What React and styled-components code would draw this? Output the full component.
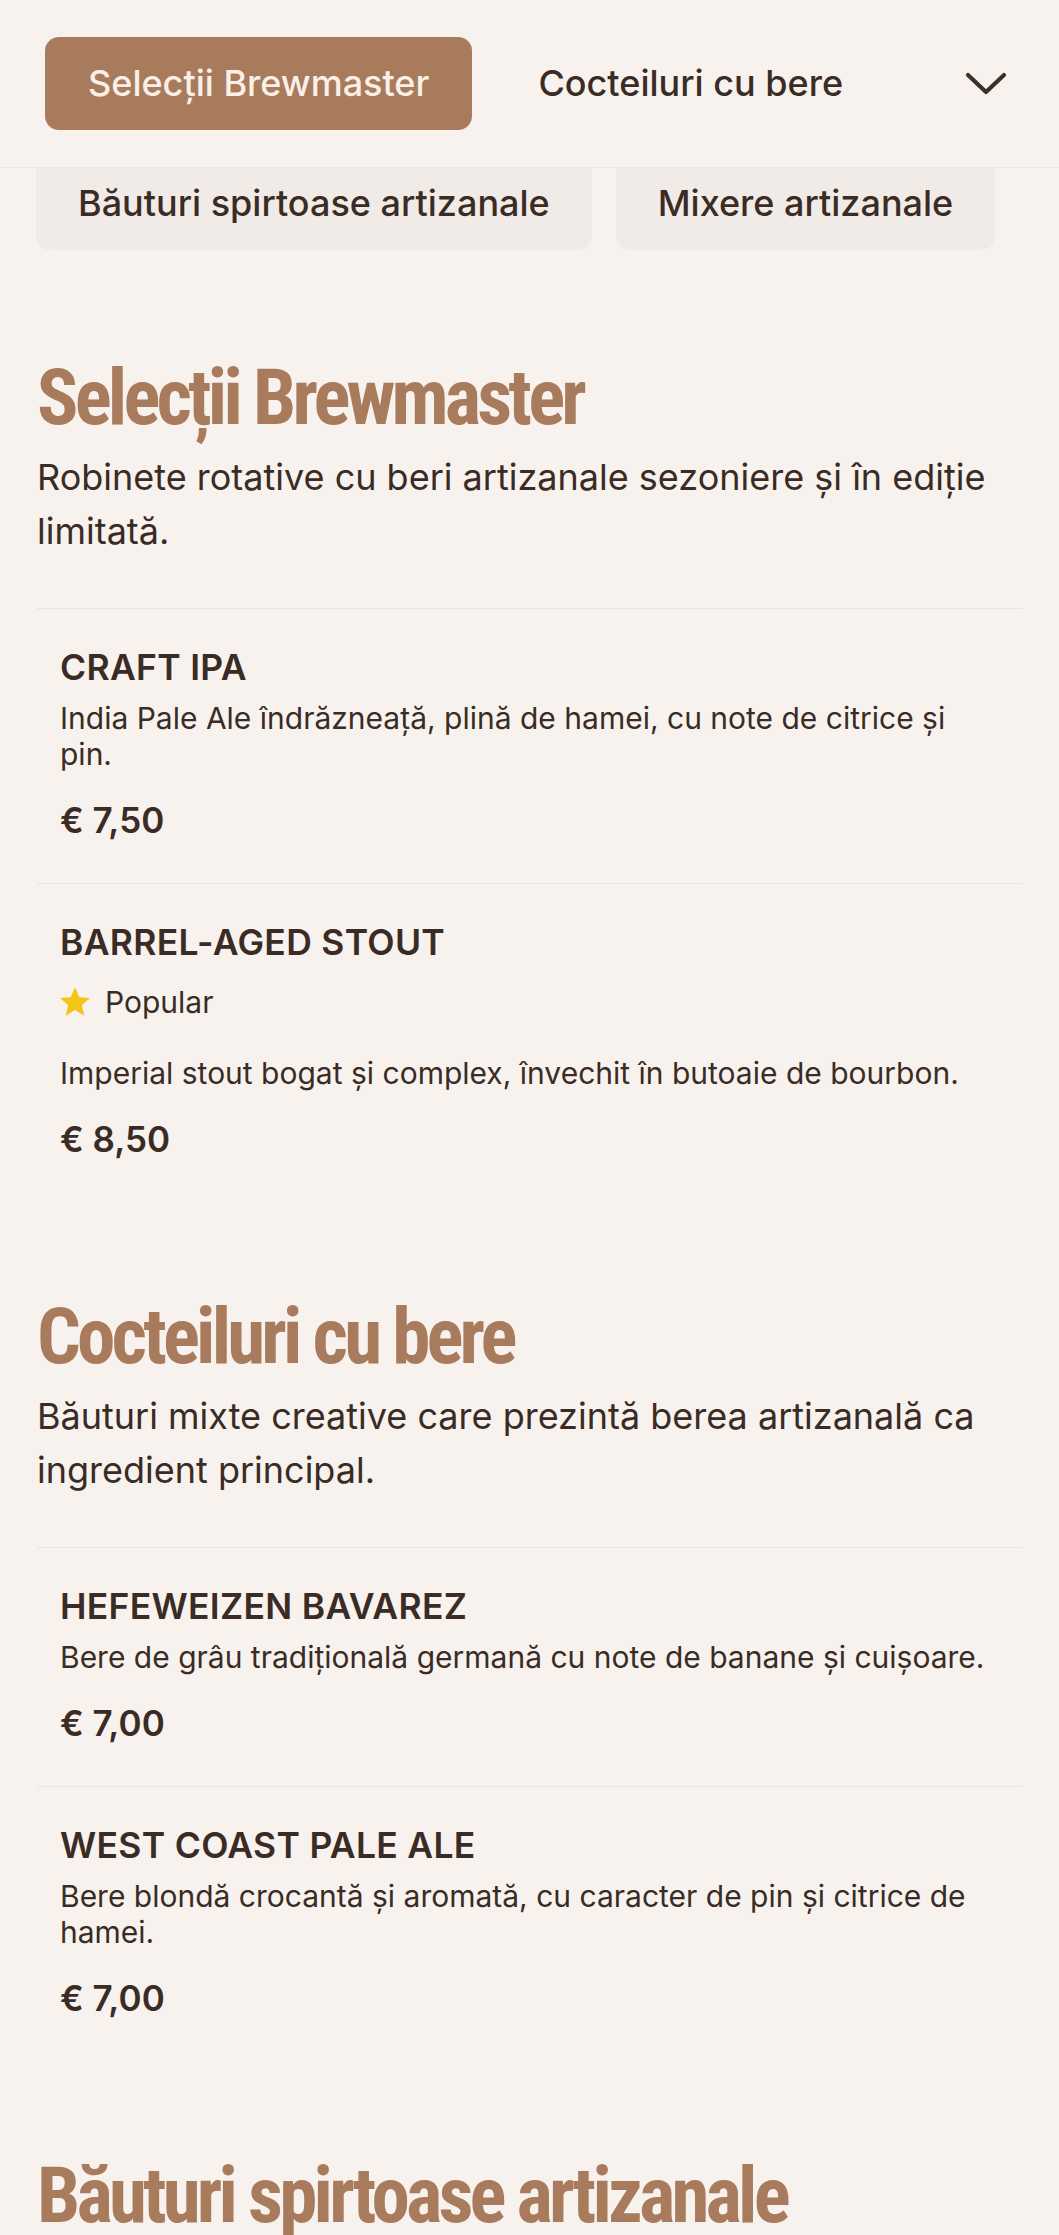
import React from "react";
import styled, { createGlobalStyle } from "styled-components";

const GlobalStyle = createGlobalStyle`
  * {
    box-sizing: border-box;
  }

  body {
    margin: 0;
    background: #f7f2ee;
    color: #3a2c24;
    font-family: Inter, "Noto Sans", sans-serif;
  }
`;

const sections = [
  {
    title: "Selecții Brewmaster",
    text: "Robinete rotative cu beri artizanale sezoniere și în ediție limitată.",
    items: [
      {
        name: "Craft IPA",
        desc: "India Pale Ale îndrăzneață, plină de hamei, cu note de citrice și pin.",
        price: "€ 7,50",
      },
      {
        name: "Barrel-Aged Stout",
        popular: true,
        desc: "Imperial stout bogat și complex, învechit în butoaie de bourbon.",
        price: "€ 8,50",
      },
    ],
  },
  {
    title: "Cocteiluri cu bere",
    text: "Băuturi mixte creative care prezintă berea artizanală ca ingredient principal.",
    items: [
      {
        name: "Hefeweizen Bavarez",
        desc: "Bere de grâu tradițională germană cu note de banane și cuișoare.",
        price: "€ 7,00",
      },
      {
        name: "West Coast Pale Ale",
        desc: "Bere blondă crocantă și aromată, cu caracter de pin și citrice de hamei.",
        price: "€ 7,00",
      },
    ],
  },
  {
    title: "Băuturi spirtoase artizanale",
    text: "",
    items: [],
  },
];

function App() {
  return (
    <Page>
      <GlobalStyle />
      <Header>
        <Tab $active>Selecții Brewmaster</Tab>
        <Tab>Cocteiluri cu bere</Tab>
        <Toggle aria-label="Mai multe categorii">
          <svg width="44" height="26" viewBox="0 0 44 26" fill="none">
            <polyline
              points="4,4 22,21 40,4"
              stroke="#3d302a"
              strokeWidth="4.2"
              strokeLinecap="round"
              strokeLinejoin="round"
            />
          </svg>
        </Toggle>
      </Header>
      <ChipRow>
        <Chip>Băuturi spirtoase artizanale</Chip>
        <Chip>Mixere artizanale</Chip>
      </ChipRow>

      <Main>
        {sections.map((section) => (
          <Section key={section.title}>
            <SectionTitle>{section.title}</SectionTitle>
            {section.text && <SectionText>{section.text}</SectionText>}
            {section.items.map((item) => (
              <Item key={item.name}>
                <ItemName>{item.name}</ItemName>
                {item.popular && (
                  <Badge>
                    <svg width="30" height="30" viewBox="2 2 20 20">
                      <path
                        d="M12 2.2l2.9 6.6 7.1.6-5.4 4.7 1.6 7-6.2-3.7-6.2 3.7 1.6-7L2 9.4l7.1-.6z"
                        fill="#f5c419"
                      />
                    </svg>
                    Popular
                  </Badge>
                )}
                <ItemDesc>{item.desc}</ItemDesc>
                <Price>{item.price}</Price>
              </Item>
            ))}
          </Section>
        ))}
      </Main>
    </Page>
  );
}

const Page = styled.div`
  min-height: 2235px;
  background: #f7f2ee;
`;

const Header = styled.header`
  position: sticky;
  top: 0;
  z-index: 2;
  height: 168px;
  display: flex;
  align-items: center;
  gap: 23px;
  padding: 0 51px 0 45px;
  background: #f7f2ee;
  border-bottom: 1px solid #ede6e0;
`;

const Tab = styled.button`
  border: none;
  border-radius: 14px;
  padding: 23px 43px;
  font-family: Inter, sans-serif;
  font-size: 36px;
  font-weight: 500;
  line-height: 47px;
  white-space: nowrap;
  cursor: pointer;
  background: ${(p) => (p.$active ? "#a87b5d" : "transparent")};
  color: ${(p) => (p.$active ? "#fbf0e7" : "#3a2c24")};
`;

const Toggle = styled.button`
  margin-left: auto;
  border: none;
  background: none;
  padding: 0;
  display: flex;
  cursor: pointer;
`;

const ChipRow = styled.nav`
  display: flex;
  gap: 24px;
  margin-top: -11px;
  padding: 0 36px;
`;

const Chip = styled.button`
  border: none;
  border-radius: 14px;
  padding: 23px 42px;
  background: #f0ebe6;
  color: #3a2c24;
  font-family: Inter, sans-serif;
  font-size: 36px;
  font-weight: 500;
  line-height: 47px;
  white-space: nowrap;
`;

const Main = styled.main`
  padding: 104px 37px 0;
`;

const Section = styled.section`
  & + & {
    margin-top: 91px;
  }
`;

const SectionTitle = styled.h2`
  margin: 0 0 8px;
  font-family: "Roboto Condensed", "Open Sans Condensed", "Liberation Sans Narrow",
    "DejaVu Sans Condensed", sans-serif;
  font-stretch: condensed;
  font-size: 77px;
  font-weight: 700;
  line-height: 88px;
  letter-spacing: -3.8px;
  color: #a87b5d;
`;

const SectionText = styled.p`
  margin: 0 0 50px;
  font-size: 36px;
  line-height: 54px;
  color: #3a2c24;
`;

const Item = styled.article`
  border-top: 1px solid #ece5df;
  padding: 37px 30px 41px 23px;
`;

const ItemName = styled.h3`
  margin: 0;
  font-size: 35.5px;
  font-weight: 600;
  line-height: 44px;
  letter-spacing: 0.3px;
  text-transform: uppercase;
  color: #3a2c24;
`;

const Badge = styled.div`
  display: flex;
  align-items: center;
  gap: 15px;
  margin: 19px 0 35px;
  font-size: 30px;
  line-height: 36px;
  color: #3a2c24;
`;

const ItemDesc = styled.p`
  margin: 10px 0 0;
  font-size: 30px;
  line-height: 36px;
  color: #3a2c24;
`;

const Price = styled.div`
  margin-top: 26px;
  font-size: 35px;
  font-weight: 600;
  line-height: 44px;
  color: #3a2c24;
`;

export default App;
